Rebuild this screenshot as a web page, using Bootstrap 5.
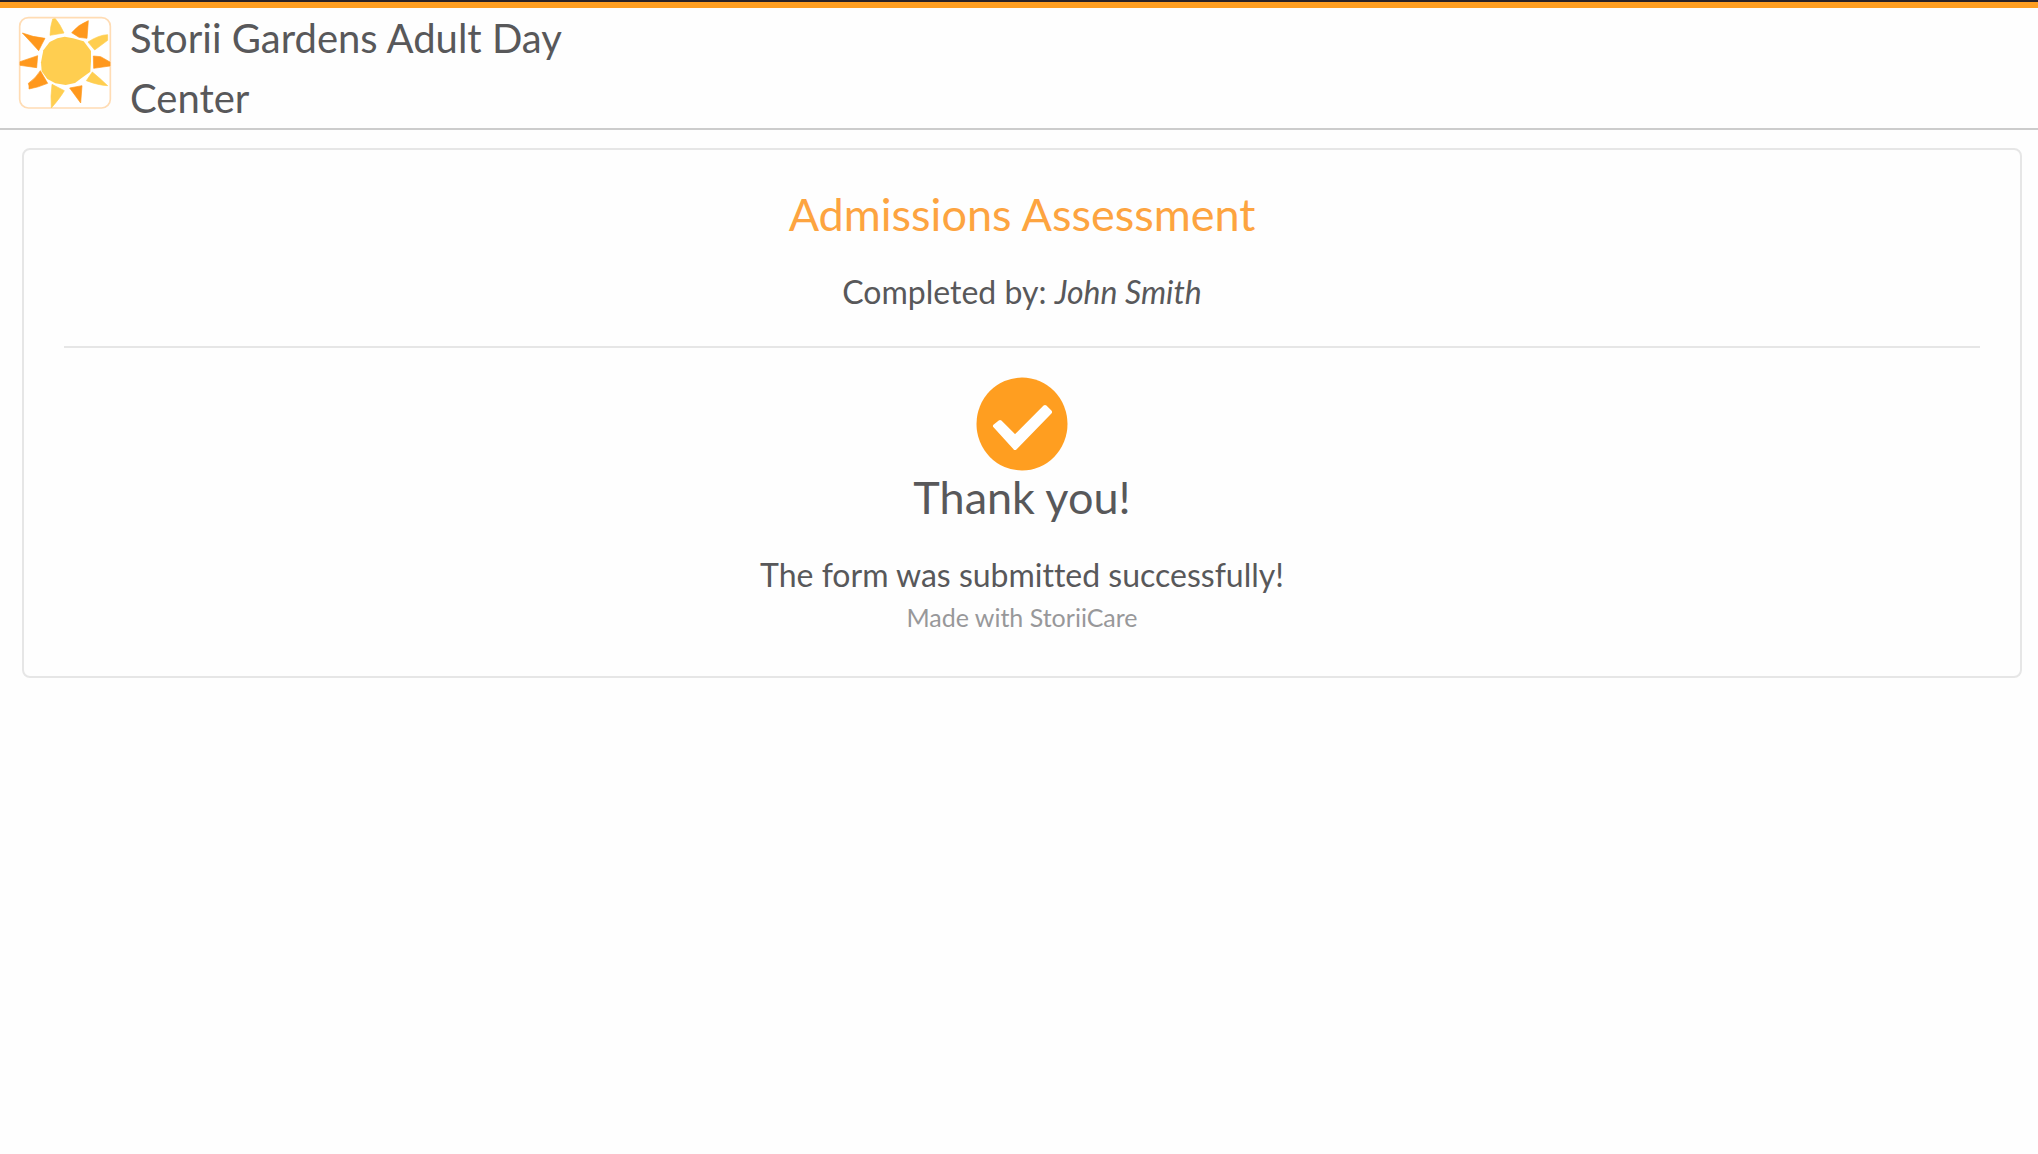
<!DOCTYPE html>
<html lang="en">
<head>
<meta charset="utf-8">
<meta name="viewport" content="width=device-width, initial-scale=1">
<title>Admissions Assessment</title>
<link href="https://cdn.jsdelivr.net/npm/bootstrap@5.3.0/dist/css/bootstrap.min.css" rel="stylesheet">
<style>
  body { font-family: Lato, "Open Sans", sans-serif; background: #fefefe; color: #58585a; font-size: 32px; line-height: 40px; font-variant-ligatures: none; }
  .site-header { border-top: 2px solid #2a2226; border-bottom: 2px solid #ccc; }
  .accent-bar { height: 6px; background: #ff9e20; }
  .brand-row { padding: 0 18px; gap: 18px; height: 120px; }
  .brand-logo { width: 94px; height: 94px; margin-top: 8px; }
  .brand-name { font-size: 40px; line-height: 60px; max-width: 480px; }
  .page-main { padding: 18px 16px 18px 22px; }
  .form-panel { border: 2px solid #e6e6e6; border-radius: 8px; padding: 38px 40px 39px; }
  .form-title, .thanks { font-size: 45px; line-height: 52px; font-weight: 400; margin-bottom: 32px; }
  .form-title { color: #fda440; }
  .divider { border-top: 2px solid #e6e6e6; opacity: 1; margin: 34px 0 29px; }
  .check-icon { width: 92px; height: 94px; }
  .made-with { font-size: 25px; color: #98989a; margin-top: 2px; }
</style>
<script src="https://cdn.jsdelivr.net/npm/bootstrap@5.3.0/dist/js/bootstrap.bundle.min.js"></script>
</head>
<body>
<header class="site-header">
  <div class="accent-bar"></div>
  <div class="brand-row d-flex align-items-start">
    <svg class="brand-logo flex-shrink-0" viewBox="54 48 282 282" role="img" aria-label="Sun logo">
      <rect x="59" y="53" width="272" height="271" rx="26" fill="#fff" stroke="#ffdcb4" stroke-width="5"/>
      <path fill="#ffce50" stroke="#ffce50" stroke-width="2" d="M166 56Q180 72 192 99L150 106Q151 78 158 57ZM264 126Q296 105 323 104V121L284 150ZM277 216Q300 235 323 257Q295 256 259 242ZM156 253L193 272Q181 293 154 324Q151 290 156 253Z"/>
      <path fill="#ff981d" stroke="#ff981d" stroke-width="2" d="M265 62L261 115 237 112 215 98Q234 74 265 62ZM67 99Q100 112 135 115Q126 132 116 152Q96 130 67 99ZM113 167L110 203 60 196V185ZM280 168L302 170 330 186V198L281 205ZM121 212L143 250Q115 262 87 267Q88 257 85 250Q108 234 121 212ZM209 264L246 257 242 309Z"/>
      <path fill="#ffce50" d="M172 115L194 110 219 115 251 124 273 153V184L271 215 244 235 225 249 197 255 166 250 142 237 125 214 123 187 130 151 149 126Z"/>
    </svg>
    <div class="brand-name">Storii Gardens Adult Day Center</div>
  </div>
</header>
<main class="page-main">
  <section class="form-panel text-center">
    <h1 class="form-title">Admissions Assessment</h1>
    <p class="mb-0">Completed by: <em>John Smith</em></p>
    <hr class="divider">
    <svg class="check-icon d-block mx-auto" viewBox="0 0 92 94" aria-hidden="true">
      <ellipse cx="46" cy="47" rx="45.5" ry="46.5" fill="#ff9e20"/>
      <path d="M19 49L24 45 39 60 69 30 74 35 39 71Z" fill="#fff" stroke="#fff" stroke-width="4" stroke-linejoin="round"/>
    </svg>
    <h2 class="thanks">Thank you!</h2>
    <p class="mb-0">The form was submitted successfully!</p>
    <p class="made-with mb-0">Made with StoriiCare</p>
  </section>
</main>
</body>
</html>
